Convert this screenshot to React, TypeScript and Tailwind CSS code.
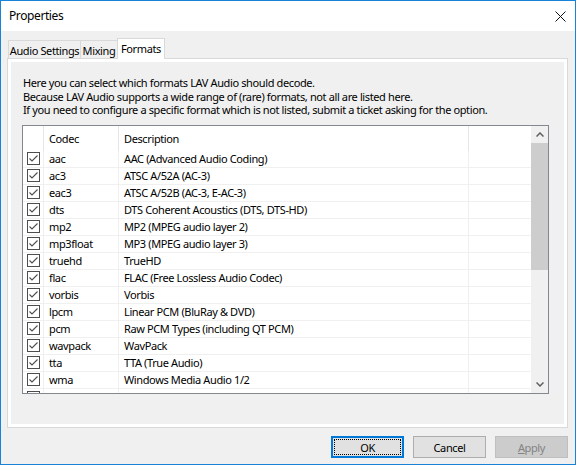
import React from 'react'

const font = { fontFamily: '"Noto Sans", "Open Sans", sans-serif' }

const rows: [string, string][] = [
  ['aac', 'AAC (Advanced Audio Coding)'],
  ['ac3', 'ATSC A/52A (AC-3)'],
  ['eac3', 'ATSC A/52B (AC-3, E-AC-3)'],
  ['dts', 'DTS Coherent Acoustics (DTS, DTS-HD)'],
  ['mp2', 'MP2 (MPEG audio layer 2)'],
  ['mp3float', 'MP3 (MPEG audio layer 3)'],
  ['truehd', 'TrueHD'],
  ['flac', 'FLAC (Free Lossless Audio Codec)'],
  ['vorbis', 'Vorbis'],
  ['lpcm', 'Linear PCM (BluRay & DVD)'],
  ['pcm', 'Raw PCM Types (including QT PCM)'],
  ['wavpack', 'WavPack'],
  ['tta', 'TTA (True Audio)'],
  ['wma', 'Windows Media Audio 1/2'],
]

function Check() {
  return (
    <svg width="13" height="13" viewBox="0 0 13 13" className="shrink-0">
      <rect x="0.5" y="0.5" width="12" height="12" fill="#fff" stroke="#4d4d4d" />
      <path d="M2.5 6.5 L5 9 L10.5 3.5" fill="none" stroke="#4d4d4d" strokeWidth="1.1" />
    </svg>
  )
}

function Row({ codec, desc }: { codec: string; desc: string }) {
  return (
    <div className="flex h-[17px] shrink-0 border-b border-[#f0f0f0]">
      <div className="w-[21px] shrink-0 border-r border-[#f0f0f0] flex items-center pl-[4px]">
        <Check />
      </div>
      <div className="w-[75px] shrink-0 border-r border-[#f0f0f0] pl-[5px] pt-[1px] flex items-center">{codec}</div>
      <div className="w-[350px] shrink-0 border-r border-[#f0f0f0] pl-[5px] pt-[1px] flex items-center whitespace-nowrap">{desc}</div>
      <div className="flex-1" />
    </div>
  )
}

export default function App() {
  return (
    <div
      className="w-[576px] h-[465px] border border-[#1883d7] bg-[#f0f0f0] flex flex-col text-[11px] tracking-[-0.38px] text-black overflow-hidden"
      style={font}
    >
      {/* title bar */}
      <div className="h-[30px] bg-white flex items-center justify-between pl-[8px] pr-[9px] shrink-0">
        <span className="leading-none text-[12px] tracking-[-0.4px]">Properties</span>
        <svg width="11" height="11" viewBox="0 0 11 11">
          <path d="M0.5 0.5 L10.5 10.5 M10.5 0.5 L0.5 10.5" stroke="#111" strokeWidth="1" />
        </svg>
      </div>

      <div className="pl-[6px] pt-[7px] flex flex-col">
        {/* tabs */}
        <div className="flex items-end h-[20px] pl-[1px] whitespace-nowrap">
          <div className="w-[73px] h-[18px] border border-b-0 border-[#d9d9d9] flex items-center justify-center leading-none pt-[1px]">
            Audio Settings
          </div>
          <div className="w-[37px] h-[18px] border border-l-0 border-b-0 border-[#d9d9d9] flex items-center justify-center leading-none pt-[1px]">
            Mixing
          </div>
          <div className="w-[48px] h-[21px] -ml-px -mb-px relative z-10 bg-white border border-b-0 border-[#d9d9d9] flex items-start justify-center leading-none pt-[4px]">
            Formats
          </div>
        </div>

        {/* panel */}
        <div className="w-[561px] h-[370px] border border-[#d9d9d9] bg-white p-[3px]">
          <div className="h-full bg-[#f0f0f0] flex flex-col pl-[11px] pt-[14px]">
            <div className="pl-[1px] leading-[13.5px] whitespace-nowrap">
              <p>Here you can select which formats LAV Audio should decode.</p>
              <p>Because LAV Audio supports a wide range of (rare) formats, not all are listed here.</p>
              <p>If you need to configure a specific format which is not listed, submit a ticket asking for the option.</p>
            </div>

            {/* list */}
            <div className="mt-[8px] w-[527px] h-[269px] border border-[#828790] bg-white flex overflow-hidden">
              <div className="flex-1 flex flex-col overflow-hidden">
                <div className="flex h-[25px] shrink-0">
                  <div className="w-[21px] shrink-0 border-r border-[#e5e5e5]" />
                  <div className="w-[75px] shrink-0 border-r border-[#e5e5e5] pl-[5px] pt-[2px] flex items-center">Codec</div>
                  <div className="w-[350px] shrink-0 border-r border-[#e5e5e5] pl-[5px] pt-[2px] flex items-center">Description</div>
                  <div className="flex-1" />
                </div>
                {rows.map(([c, d]) => (
                  <Row key={c} codec={c} desc={d} />
                ))}
                {/* partially visible next row */}
                <div className="flex h-[17px] shrink-0">
                  <div className="w-[21px] shrink-0 border-r border-[#f0f0f0] flex items-center pl-[4px]">
                    <Check />
                  </div>
                  <div className="w-[75px] shrink-0 border-r border-[#f0f0f0]" />
                  <div className="w-[350px] shrink-0 border-r border-[#f0f0f0]" />
                </div>
              </div>

              {/* scrollbar */}
              <div className="w-[17px] shrink-0 bg-[#f0f0f0] flex flex-col">
                <div className="h-[17px] flex items-center justify-center">
                  <svg width="8" height="5" viewBox="0 0 8 5">
                    <path d="M0.5 4.5 L4 1 L7.5 4.5" fill="none" stroke="#606060" strokeWidth="1.5" />
                  </svg>
                </div>
                <div className="h-[127px] bg-[#cdcdcd]" />
                <div className="flex-1" />
                <div className="h-[17px] flex items-center justify-center">
                  <svg width="8" height="5" viewBox="0 0 8 5">
                    <path d="M0.5 0.5 L4 4 L7.5 0.5" fill="none" stroke="#606060" strokeWidth="1.5" />
                  </svg>
                </div>
              </div>
            </div>
          </div>
        </div>

        {/* buttons */}
        <div className="flex justify-end gap-[9px] pr-[7px] mt-[8px]">
          <button className="w-[73px] h-[22px] bg-[#e1e1e1] border-2 border-[#0078d7] p-[1px]">
            <div className="w-full h-full border border-dotted border-black flex items-center justify-center leading-none">
              OK
            </div>
          </button>
          <button className="w-[73px] h-[22px] bg-[#e1e1e1] border border-[#adadad] flex items-center justify-center leading-none">
            Cancel
          </button>
          <button className="w-[73px] h-[22px] bg-[#cccccc] border border-[#bfbfbf] flex items-center justify-center leading-none text-[#838383]">
            <span>
              <span className="underline">A</span>pply
            </span>
          </button>
        </div>
      </div>
    </div>
  )
}
